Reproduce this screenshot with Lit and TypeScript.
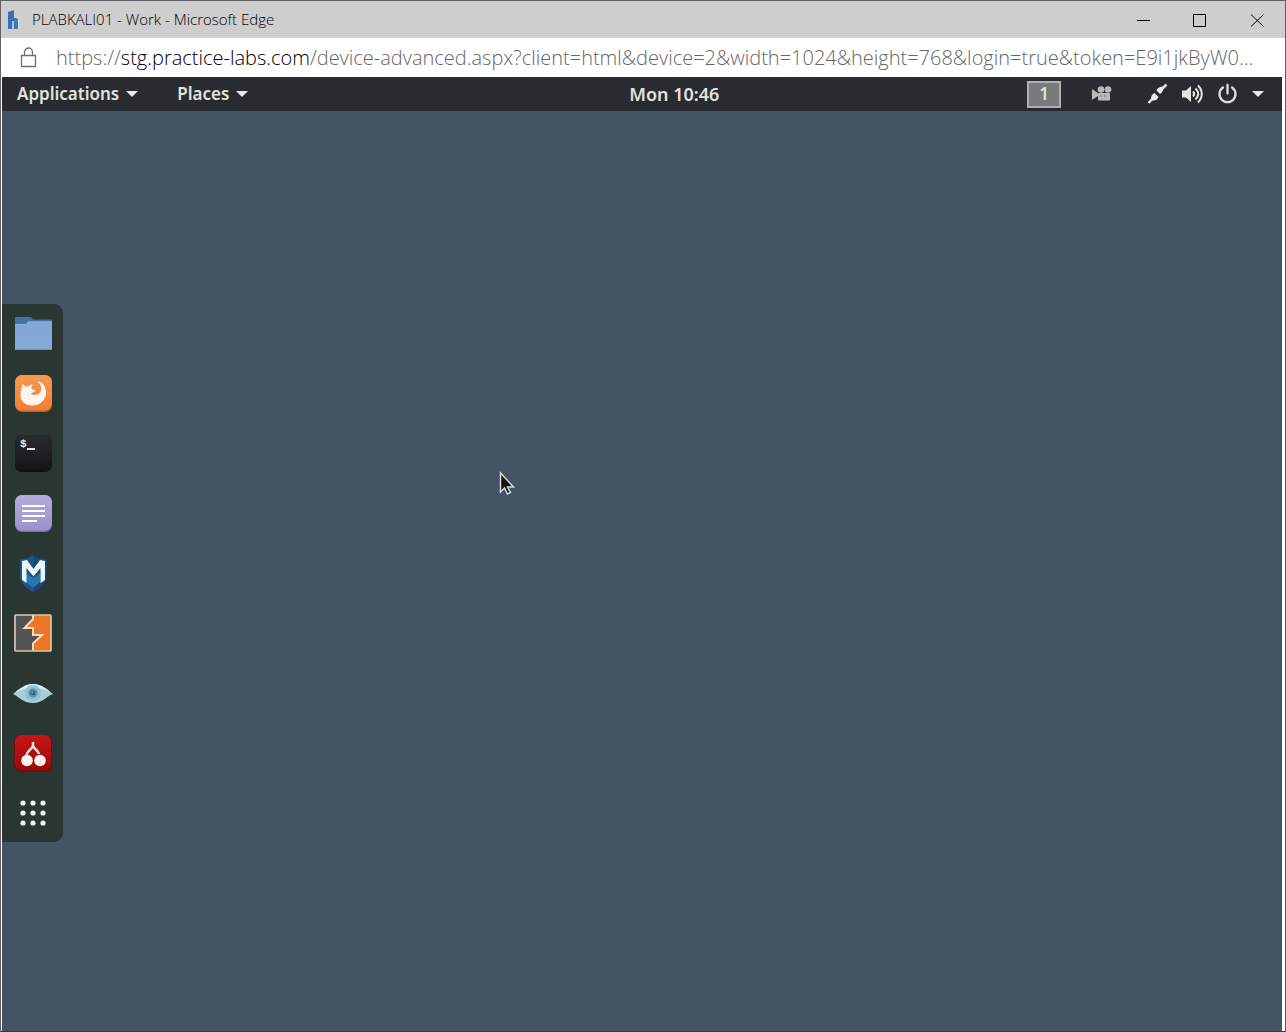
import { LitElement, html, css, svg, type TemplateResult } from "lit";
import { customElement, property } from "lit/decorators.js";

/* Title bar with the window controls */
@customElement("title-bar")
class TitleBar extends LitElement {
  @property() label = "";

  static styles = css`
    :host { display: block; }
    .bar {
      display: flex; align-items: center; height: 37px;
      background: #cecece; color: #000;
      font: 320 15px/20px "Open Sans", "Noto Sans", sans-serif;
    }
    .logo { width: 16px; height: 20px; margin-left: 5px; flex: none; }
    .label { margin: 0 0 0 10px; padding-bottom: 2px; flex: 1; font: inherit; white-space: nowrap; }
    .controls { display: flex; height: 100%; }
    button {
      width: 57px; height: 100%; padding: 0; border: 0; background: none;
      display: flex; align-items: center; justify-content: center;
    }
    button svg { width: 14px; height: 14px; fill: none; stroke: #000; stroke-width: 1; }
  `;

  render() {
    return html`
      <header class="bar">
        <svg class="logo" viewBox="0 0 16 20" aria-hidden="true">
          <path d="M2 2L8 0v8c3-.5 4 1 4 3v8H8v-7H6v7H2z" fill="#3f6db2" />
          <path d="M6 11h2v8H6z" fill="#a9c3e6" />
          <path d="M8 8c3-.5 4 1 4 3v8H8.500z" fill="#4877b6" />
          <path d="M12 10h2v8h-2z" fill="#d8dad9" />
        </svg>
        <h1 class="label">${this.label}</h1>
        <div class="controls">
          <button aria-label="Minimize"><svg viewBox="0 0 14 14"><path d="M1 7.500h13" /></svg></button>
          <button aria-label="Maximize"><svg viewBox="0 0 14 14"><path d="M.5 1.500h12v12H.5z" /></svg></button>
          <button aria-label="Close"><svg viewBox="0 0 14 14"><path d="M1 1.500l12.500 12M13.500 1.500L1 13.500" /></svg></button>
        </div>
      </header>
    `;
  }
}

/* Read-only address line with the host name emphasised */
@customElement("address-bar")
class AddressBar extends LitElement {
  static styles = css`
    :host { display: block; }
    .bar {
      display: flex; align-items: center; height: 39px; padding: 0 16px 0 19px;
      background: #fff; color: #666;
      font: 320 20px/28px "Open Sans", "Noto Sans", sans-serif;
    }
    .lock { width: 17px; height: 22px; flex: none; fill: none; stroke: #707070; stroke-width: 1.300; }
    .url { margin-left: 19px; white-space: nowrap; overflow: hidden; }
    .host { color: #000; }
  `;

  render() {
    return html`
      <div class="bar">
        <svg class="lock" viewBox="0 0 17 22" role="img" aria-label="Secure connection">
          <path d="M1.500 8.500h14v11h-14zM4.500 8.500V5a4 4 0 0 1 8 0v3.500" />
        </svg>
        <span class="url">https://<span class="host">stg.practice-labs.com</span>/device-advanced.aspx?client=html&amp;device=2&amp;width=1024&amp;height=768&amp;login=true&amp;token=E9i1jkByW0...</span>
      </div>
    `;
  }
}

const caret = () => html`
  <svg class="caret" viewBox="0 0 12 8" aria-hidden="true"><path d="M0 1h12L6 7z" fill="#e8e8e6" /></svg>
`;

/* Panel along the top of the remote desktop */
@customElement("top-panel")
class TopPanel extends LitElement {
  static styles = css`
    :host { display: block; }
    .panel {
      display: flex; align-items: center; height: 34px;
      background: #282c30; color: #e2e2df;
      font: 600 17px/24px "Noto Sans", "Open Sans", sans-serif;
    }
    nav { display: flex; gap: 39px; width: 49%; padding-left: 15px; box-sizing: border-box; }
    button {
      display: flex; align-items: center; gap: 7px; padding: 0; border: 0;
      background: none; color: inherit; font: inherit; white-space: nowrap;
    }
    .clock { font-size: 18px; }
    .caret { width: 12px; height: 8px; flex: none; }
    .status { display: flex; align-items: center; margin-left: auto; padding-right: 18px; gap: 14px; }
    .workspace {
      width: 34px; height: 27px; box-sizing: border-box; justify-content: center;
      background: #77797a; border: 2px solid #aeb1b0; margin-right: 16px;
    }
    .camera { margin-right: 21px; }
    .icon { width: 21px; height: 22px; display: block; }
  `;

  render() {
    return html`
      <div class="panel">
        <nav>
          <button>Applications ${caret()}</button>
          <button>Places ${caret()}</button>
        </nav>
        <button class="clock">Mon 10:46</button>
        <div class="status">
          <button class="workspace">1</button>
          <button class="camera" aria-label="Screen recording">
            <svg class="icon" viewBox="0 0 21 22" fill="#b9bbba">
              <path d="M1 6l6 4v3l-6 4z" />
              <circle cx="10" cy="6.500" r="3.300" /><circle cx="17" cy="6.500" r="3.300" />
              <rect x="7" y="10" width="12" height="7.500" rx="1" />
              <path d="M9 13h2M13 13h2" stroke="#686b6d" />
            </svg>
          </button>
          <button aria-label="Wired network">
            <svg class="icon" viewBox="0 0 21 22">
              <path d="M1.500 20L8 13M13 8l6.500-6.500" stroke="#e3e3e1" stroke-width="2.500" />
              <path d="M4 16.500c0-3 1-5.500 3.500-6.500l4 4c-1 3-3.500 3.500-6.500 3.500zM9.500 7.500c1-3 3.500-4 7-4 0 3.500-1 6-3.500 7.500z" fill="#e9e9e7" />
            </svg>
          </button>
          <button aria-label="Volume">
            <svg class="icon" viewBox="0 0 21 22" fill="none" stroke="#e3e3e1" stroke-width="2">
              <path d="M0 7.500h4L9 3v16l-5-4.500H0z" fill="#e3e3e1" stroke="none" />
              <path d="M11 8.500c1.500 1.500 1.500 3.500 0 5M13.500 5.500c3.500 3.500 3.500 7.500 0 11M16 2.500c5 5 5 12 0 17" />
            </svg>
          </button>
          <button aria-label="Power">
            <svg class="icon" viewBox="0 0 21 22" fill="none" stroke="#dededc" stroke-width="2.300" stroke-linecap="round">
              <path d="M6 4.500a8 8 0 1 0 9 0M10.500 2v8.500" />
            </svg>
          </button>
          <button aria-label="System menu">${caret()}</button>
        </div>
      </div>
    `;
  }
}

interface Launcher { name: string; art: TemplateResult; }

const launchers: Launcher[] = [
  {
    name: "Files",
    art: svg`
      <path d="M1 3h16l2 2.500h19V20H1z" fill="#44719f" />
      <path d="M1 10h11l2-2.500h24V36H1z" fill="url(#folder)" />
      <path d="M1 10.500h11.500l2-2.500H38" fill="none" stroke="#91b2dc" />
      <path d="M1 35.500h37" stroke="#7191ba" />`,
  },
  {
    name: "Firefox",
    art: svg`
      <rect x="1" y="1" width="37" height="37" rx="7" fill="#bc632b" />
      <rect x="1" y="1" width="37" height="35.500" rx="7" fill="url(#fox)" />
      <path d="M8.500 10l3.500 3c2-1 4-2.500 7-2.500-1.500 1.500-2 3-1.500 4.500 1.500 1 3.500.5 4 1.500-1 2-4 2-4.500 3.500 3 2 8 1 9.500-2 1.500-3 .5-6-1-9 5 1 7 7 6 12-1.500 6.500-6.500 10.500-13 10.500C11 31.500 6.500 27 6.500 21c0-4 1-6.500 2-11z" fill="#fff7ee" />
      <path d="M24.500 8c5 2 8 8 6.500 14" fill="none" stroke="#fff7ee" stroke-width="1.500" />`,
  },
  {
    name: "Terminal",
    art: svg`
      <rect x="1" y="1" width="37" height="37" rx="7" fill="#101112" />
      <rect x="1" y="1" width="37" height="35" rx="7" fill="url(#term)" />
      <text x="6" y="13" font-family="Liberation Mono, monospace" font-weight="700" font-size="11" fill="#f1f1f1">$</text>
      <path d="M13 15h8" stroke="#e4e4e4" stroke-width="2" />`,
  },
  {
    name: "Text Editor",
    art: svg`
      <rect x="1" y="1" width="37" height="37" rx="7" fill="#7c73b4" />
      <rect x="1" y="1" width="37" height="35.500" rx="7" fill="url(#note)" />
      <path d="M8 12h23M8 17h23M8 22h23M8 27h15" stroke="#fff" stroke-width="2.200" />`,
  },
  {
    name: "Metasploit",
    art: svg`
      <path d="M6 5c5 0 9-1 13-4 4 3 8 4 13.500 4v17c0 7-6 12-13.500 16C12 34 6 29 6 22z" fill="#1d5488" />
      <path d="M19 1c4 3 8 4 13.500 4v17c0 7-6 12-13.500 16z" fill="#174876" />
      <path d="M12 19l7 5 7-5v9l-7 6-7-6z" fill="#2577ae" />
      <path d="M8 7l5-1 6.500 9L26 6l5 1v19l-4.500 3V14l-7 8.500-7-8.500v15L8 26z" fill="#edf5fb" />`,
  },
  {
    name: "Burp Suite",
    art: svg`
      <rect x="1" y="1" width="36" height="36" fill="#515355" />
      <path d="M19 1h18v36H19v-8l9-8h-9v-7h-8l8-9z" fill="#ed7526" />
      <path d="M19 1v4l-8.500 9H19v7h9l-9 8.500V37" fill="none" stroke="#f3ddc0" stroke-width="2" />
      <rect x="1" y="1" width="36" height="36" rx="1" fill="none" stroke="#d9c7ae" stroke-width="1.700" />`,
  },
  {
    name: "Zenmap",
    art: svg`
      <path d="M-1 20C4 17 10 10 19 10s16 7 20 10c-5 1-10 9-20 9S4 22-1 20z" fill="#a6cfda" />
      <path d="M-1 20C5 15 11 10 19 10s15 6 20 10c-7-5-12-6-20-6S7 15-1 20z" fill="#e2f1f3" />
      <circle cx="19" cy="19" r="8" fill="#94c1cf" />
      <circle cx="19" cy="19" r="4.500" fill="#5a8fa5" />
      <circle cx="19" cy="19" r="2.200" fill="#345f72" />
      <circle cx="18.500" cy="18.500" r="1" fill="#7fa6b4" />`,
  },
  {
    name: "CherryTree",
    art: svg`
      <rect x="0" y="1" width="38" height="37" rx="7" fill="#760a0b" />
      <rect x="1" y="1" width="36" height="35" rx="6" fill="url(#cherry)" />
      <path d="M19 8v4c-2 4-6 5-7 10M19 12c2 4 5 4 6 8" fill="none" stroke="#f6dfd9" stroke-width="2.500" />
      <circle cx="13" cy="26.500" r="5.800" fill="#fff6f1" />
      <circle cx="26" cy="26.500" r="5.800" fill="#fff6f1" />`,
  },
  {
    name: "Show Applications",
    art: svg`${[9, 19, 29].map((y) => [9, 19, 29].map((x) => svg`<circle cx=${x} cy=${y} r="2.600" fill="#f1f2f1" />`))}`,
  },
];

const gradient = (id: string, from: string, to: string) => svg`
  <linearGradient id=${id} x1="0" y1="0" x2="0" y2="1">
    <stop offset="0" stop-color=${from} /><stop offset="1" stop-color=${to} />
  </linearGradient>`;

const gradients = svg`<defs>
  ${gradient("folder", "#80a5d3", "#88aada")}
  ${gradient("fox", "#f69a4d", "#f17e38")}
  ${gradient("term", "#292a2b", "#151617")}
  ${gradient("note", "#b5acdc", "#9b91cb")}
  ${gradient("cherry", "#c51516", "#9e090b")}
</defs>`;

/* Launcher dock on the left edge */
@customElement("launcher-dock")
class LauncherDock extends LitElement {
  static styles = css`
    :host { display: block; }
    ul {
      display: flex; flex-direction: column; gap: 22px; list-style: none;
      margin: 0; padding: 10px 11px 10px 12px;
      background: #293631; border-radius: 0 9px 9px 0;
    }
    button { display: block; padding: 0; border: 0; background: none; }
    svg { display: block; width: 38px; height: 38px; overflow: visible; }
  `;

  render() {
    return html`<ul>
      ${launchers.map(
        (item) => html`<li>
          <button aria-label=${item.name}>
            <svg viewBox="0 0 38 38">${gradients}${item.art}</svg>
          </button>
        </li>`,
      )}
    </ul>`;
  }
}

@customElement("app-root")
class AppRoot extends LitElement {
  static styles = css`
    :host { display: block; }
    .window {
      display: flex; flex-direction: column; min-height: 100vh; box-sizing: border-box;
      background: #fff; border: 1px solid #626266; border-bottom-color: #343b43;
    }
    .remote { flex: 1; display: flex; flex-direction: column; margin: 0 3px 0 1px; }
    .desktop {
      flex: 1; display: flex; align-items: center; position: relative;
      padding-top: 4px; background: #445464;
    }
    .pointer { position: absolute; left: 38.8%; top: 39%; width: 16px; height: 26px; }
  `;

  render() {
    return html`
      <div class="window">
        <title-bar label="PLABKALI01 - Work - Microsoft Edge"></title-bar>
        <address-bar></address-bar>
        <main class="remote">
          <top-panel></top-panel>
          <div class="desktop">
            <launcher-dock></launcher-dock>
            <svg class="pointer" viewBox="0 0 16 26" aria-hidden="true">
              <path d="M1.500 3v19l4-4 3 6 3-1.500-3-5.500h6z" fill="#101416" stroke="#d5dade" stroke-width="1.500" />
            </svg>
          </div>
        </main>
      </div>
    `;
  }
}
